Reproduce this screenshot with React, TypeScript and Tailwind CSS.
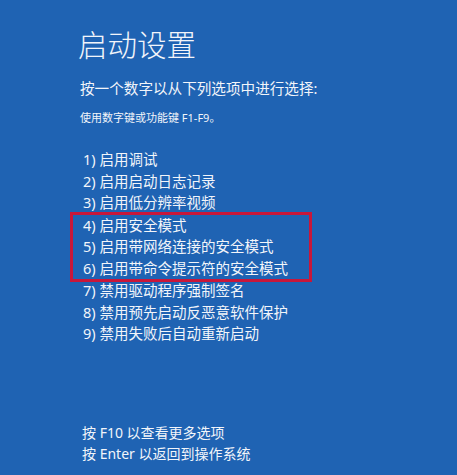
const font = { fontFamily: '"Noto Sans", "Noto Sans CJK SC", sans-serif' }

const options = [
  '1) 启用调试',
  '2) 启用启动日志记录',
  '3) 启用低分辨率视频',
  '4) 启用安全模式',
  '5) 启用带网络连接的安全模式',
  '6) 启用带命令提示符的安全模式',
  '7) 禁用驱动程序强制签名',
  '8) 禁用预先启动反恶意软件保护',
  '9) 禁用失败后自动重新启动',
]

export default function App() {
  return (
    <div
      className="w-[457px] h-[475px] overflow-hidden bg-[#1f63b3] text-[#f2f5fa] pl-[80px] pt-[27px] flex flex-col"
      style={font}
    >
      <h1 className="text-[29.5px] leading-[36px] font-light -ml-[2px]">启动设置</h1>
      <p className="mt-[15px] text-[14.6px] leading-[20px]">按一个数字以从下列选项中进行选择:</p>
      <p className="mt-[12px] text-[11px] leading-[16px]">使用数字键或功能键 F1-F9。</p>

      <ul className="mt-[23px] pl-[3px] text-[14.5px] leading-[21.5px]">
        {options.slice(0, 3).map((o) => (
          <li key={o}>{o}</li>
        ))}
        {/* 高亮框 */}
        <li className="-ml-[13px] -my-[2px] w-[242px] border-[3px] border-[#c8173a] pl-[10px]">
          <ul>
            {options.slice(3, 6).map((o) => (
              <li key={o}>{o}</li>
            ))}
          </ul>
        </li>
        {options.slice(6).map((o) => (
          <li key={o}>{o}</li>
        ))}
      </ul>

      <div className="mt-[77px] pl-[2px] text-[14px] leading-[21px]">
        <p>按 F10 以查看更多选项</p>
        <p>按 Enter 以返回到操作系统</p>
      </div>
    </div>
  )
}
